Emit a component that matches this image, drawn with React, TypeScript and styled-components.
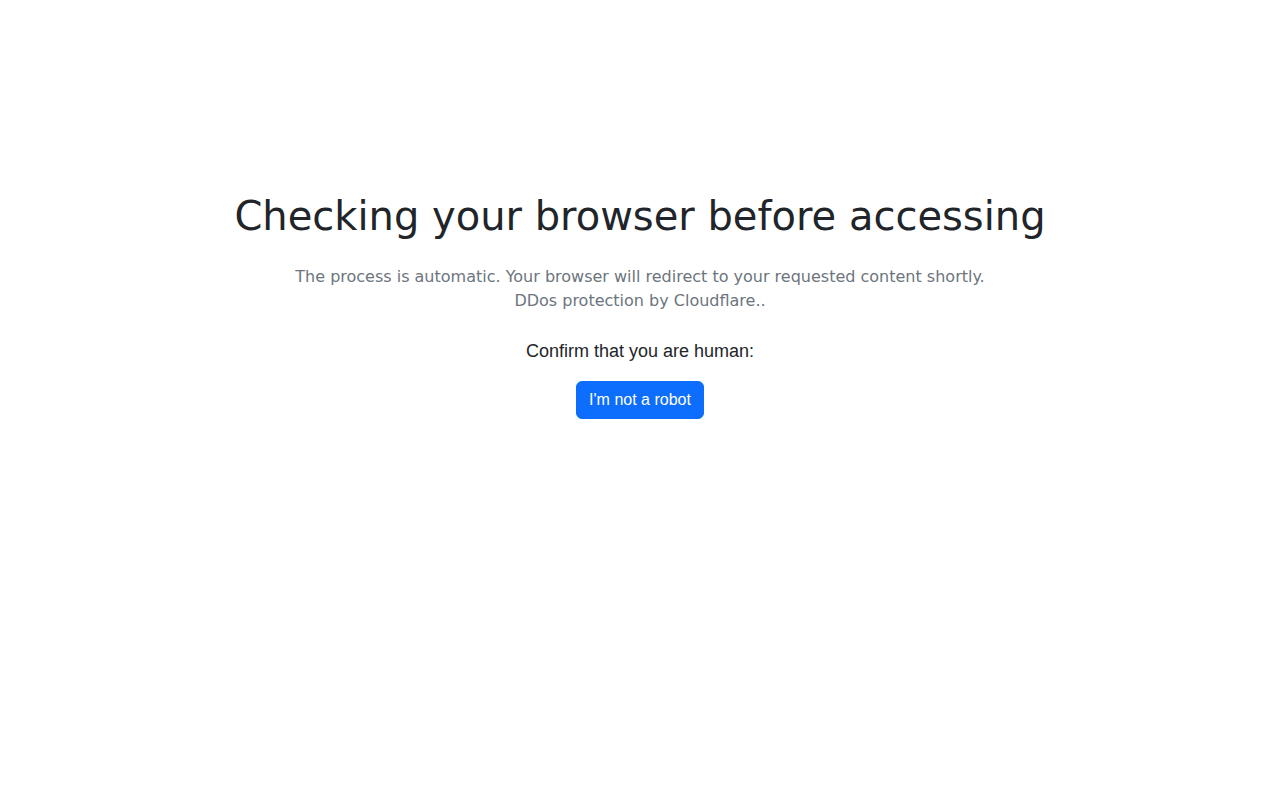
import React from 'react'
import styled, { createGlobalStyle } from 'styled-components'

const GlobalStyle = createGlobalStyle`
  html, body {
    margin: 0;
    padding: 0;
    background: #fff;
  }
  body {
    font-family: "DejaVu Sans", sans-serif;
    color: #212529;
  }
`

const Page = styled.main`
  display: flex;
  flex-direction: column;
  align-items: center;
  padding-top: 192px;
  text-align: center;
`

const Title = styled.h1`
  margin: 0 0 25px;
  font-family: "DejaVu Sans", sans-serif;
  font-size: 40px;
  font-weight: 400;
  line-height: 48px;
  color: #212529;
`

const Lead = styled.p`
  margin: 0 0 25px;
  font-size: 16px;
  line-height: 24px;
  color: #6c757d;
`

const Prompt = styled.div`
  margin-bottom: 16px;
  font-family: "Liberation Sans", Arial, sans-serif;
  font-size: 18px;
  line-height: 27px;
  color: #212529;
`

const Button = styled.button`
  height: 38px;
  padding: 0 12px;
  border: 1px solid #0d6efd;
  border-radius: 6px;
  background: #0d6efd;
  color: #fff;
  font-family: "Liberation Sans", Arial, sans-serif;
  font-size: 16px;
  line-height: 24px;
  cursor: pointer;
`

const App = () => {
  return (
    <>
      <GlobalStyle />
      <Page>
        <Title>Checking your browser before accessing</Title>
        <Lead>
          The process is automatic. Your browser will redirect to your requested content shortly.
          <br />
          DDos protection by Cloudflare..
        </Lead>
        <Prompt>Confirm that you are human:</Prompt>
        <Button type="button">I'm not a robot</Button>
      </Page>
    </>
  )
}

export default App
